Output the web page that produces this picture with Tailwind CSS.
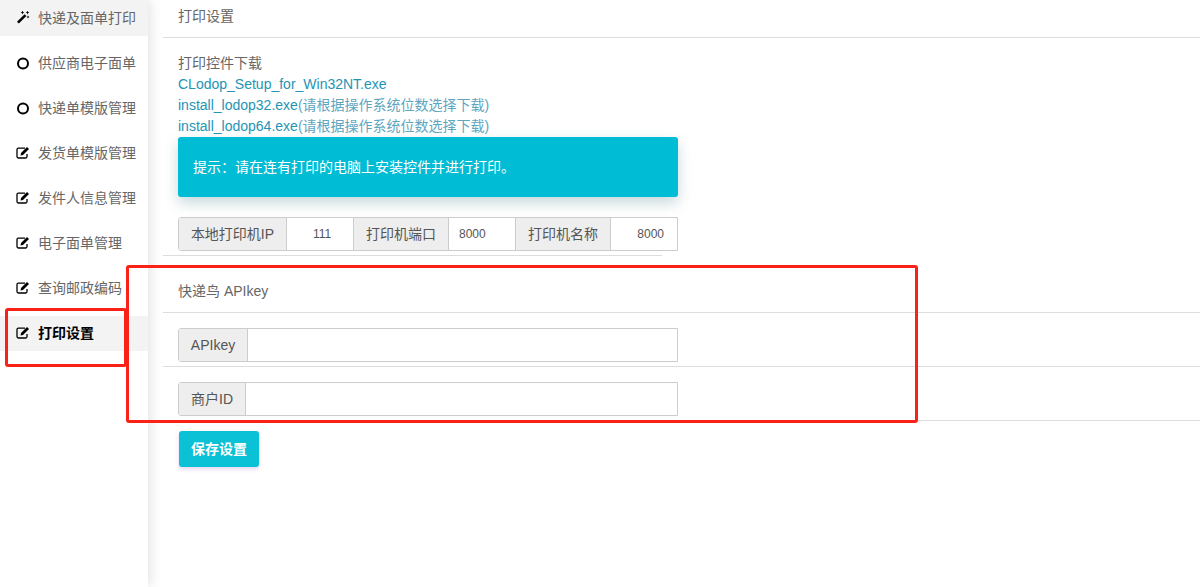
<!DOCTYPE html>
<html lang="en">
<head>
    <meta charset="UTF-8">
    <title>打印设置</title>
    <script src="https://cdn.jsdelivr.net/npm/@tailwindcss/browser@4"></script>
</head>
<body class="bg-white h-[587px] overflow-hidden relative text-[14px] leading-[21px] text-[#666] font-['Liberation_Sans','Noto_Sans_CJK_SC',sans-serif]">
<div class="flex h-full">
    <!-- Sidebar -->
    <aside class="w-[148px] shrink-0 h-full bg-white shadow-[2px_0_12px_rgba(0,0,0,0.12)] text-[#666]">
        <a class="flex items-center h-[36px] mb-[10px] pl-[16px] gap-[8px] bg-[#f3f3f3]">
            <svg class="w-[14px] h-[14px] shrink-0" viewBox="0 1 14 14"><path d="M1 11.8 8.6 4.2l1.800 1.800L2.800 13.600z" fill="#000"/><path d="M6.500.6l.6 1.300 1.300.6-1.300.6-.6 1.300-.6-1.300-1.300-.6 1.300-.6zM12 5.600l.5 1 1 .5-1 .5-.5 1-.5-1-1-.5 1-.5zM11.500.6l.6 1.300 1.300.6-1.300.6-.6 1.300-.6-1.300-1.300-.6 1.300-.6z" fill="#000"/></svg>
            <span>快递及面单打印</span>
        </a>
        <a class="flex items-center h-[35px] mb-[10px] pl-[16px] gap-[8px]">
            <svg class="w-[14px] h-[14px] shrink-0" viewBox="0 0.5 14 14"><circle cx="7" cy="7" r="5" fill="none" stroke="#000" stroke-width="2"/></svg>
            <span>供应商电子面单</span>
        </a>
        <a class="flex items-center h-[35px] mb-[10px] pl-[16px] gap-[8px]">
            <svg class="w-[14px] h-[14px] shrink-0" viewBox="0 0.5 14 14"><circle cx="7" cy="7" r="5" fill="none" stroke="#000" stroke-width="2"/></svg>
            <span>快递单模版管理</span>
        </a>
        <a class="flex items-center h-[35px] mb-[10px] pl-[16px] gap-[8px]">
            <svg class="w-[14px] h-[14px] shrink-0" viewBox="0 1.500 14 14"><path d="M11 8.500v2.600a1.400 1.400 0 0 1-1.400 1.400H2.400a1.400 1.400 0 0 1-1.400-1.400V4a1.400 1.400 0 0 1 1.400-1.400H9" fill="none" stroke="#000" stroke-width="1.300"/><path d="M4.500 10 5 7.500 11 1.500l2 2L7 9.500z" fill="#000"/></svg>
            <span>发货单模版管理</span>
        </a>
        <a class="flex items-center h-[35px] mb-[10px] pl-[16px] gap-[8px]">
            <svg class="w-[14px] h-[14px] shrink-0" viewBox="0 1.500 14 14"><path d="M11 8.500v2.600a1.400 1.400 0 0 1-1.400 1.400H2.400a1.400 1.400 0 0 1-1.400-1.400V4a1.400 1.400 0 0 1 1.400-1.400H9" fill="none" stroke="#000" stroke-width="1.300"/><path d="M4.500 10 5 7.500 11 1.500l2 2L7 9.500z" fill="#000"/></svg>
            <span>发件人信息管理</span>
        </a>
        <a class="flex items-center h-[35px] mb-[10px] pl-[16px] gap-[8px]">
            <svg class="w-[14px] h-[14px] shrink-0" viewBox="0 1.500 14 14"><path d="M11 8.500v2.600a1.400 1.400 0 0 1-1.400 1.400H2.400a1.400 1.400 0 0 1-1.400-1.400V4a1.400 1.400 0 0 1 1.400-1.400H9" fill="none" stroke="#000" stroke-width="1.300"/><path d="M4.500 10 5 7.500 11 1.500l2 2L7 9.500z" fill="#000"/></svg>
            <span>电子面单管理</span>
        </a>
        <a class="flex items-center h-[35px] mb-[10px] pl-[16px] gap-[8px]">
            <svg class="w-[14px] h-[14px] shrink-0" viewBox="0 1.500 14 14"><path d="M11 8.500v2.600a1.400 1.400 0 0 1-1.400 1.400H2.400a1.400 1.400 0 0 1-1.400-1.400V4a1.400 1.400 0 0 1 1.400-1.400H9" fill="none" stroke="#000" stroke-width="1.300"/><path d="M4.500 10 5 7.500 11 1.500l2 2L7 9.500z" fill="#000"/></svg>
            <span>查询邮政编码</span>
        </a>
        <a class="flex items-center h-[35px] pl-[16px] gap-[8px] bg-[#f3f3f3] text-black font-bold">
            <svg class="w-[14px] h-[14px] shrink-0" viewBox="0 1.500 14 14"><path d="M11 8.500v2.600a1.400 1.400 0 0 1-1.400 1.400H2.400a1.400 1.400 0 0 1-1.400-1.400V4a1.400 1.400 0 0 1 1.400-1.400H9" fill="none" stroke="#000" stroke-width="1.300"/><path d="M4.500 10 5 7.500 11 1.500l2 2L7 9.500z" fill="#000"/></svg>
            <span>打印设置</span>
        </a>
    </aside>

    <!-- Main -->
    <main class="flex-1 ml-[15px]">
        <div class="h-[38px] border-b border-[#ddd] pl-[15px] pt-[6px]">打印设置</div>

        <div class="pl-[15px] pt-[15px]">
            <p>打印控件下载</p>
            <p class="text-[#2494b5]">CLodop_Setup_for_Win32NT.exe</p>
            <p class="text-[#2494b5]">install_lodop32.exe<span class="text-[#5fa5c0]">(请根据操作系统位数选择下载)</span></p>
            <p class="text-[#2494b5]">install_lodop64.exe<span class="text-[#5fa5c0]">(请根据操作系统位数选择下载)</span></p>
            <div class="w-[500px] h-[60px] flex items-center pl-[15px] bg-[#00bcd4] text-white rounded-[3px] shadow-[0_6px_14px_rgba(0,80,100,0.22)]">提示：请在连有打印的电脑上安装控件并进行打印。</div>

            <div class="flex w-[500px] h-[34px] mt-[20px] border border-[#ccc] rounded-l-[3px] text-[#555]">
                <span class="w-[108px] shrink-0 flex items-center justify-center bg-[#eee] border-r border-[#ccc]">本地打印机IP</span>
                <span class="w-[66px] shrink-0 flex items-center justify-center text-[12px] pl-[4px]">111</span>
                <span class="w-[96px] shrink-0 flex items-center justify-center bg-[#eee] border-x border-[#ccc]">打印机端口</span>
                <span class="w-[66px] shrink-0 flex items-center pl-[10px] text-[12px]">8000</span>
                <span class="w-[96px] shrink-0 flex items-center justify-center bg-[#eee] border-x border-[#ccc]">打印机名称</span>
                <span class="flex-1 flex items-center justify-end pr-[13px] text-[12px]">8000</span>
            </div>
        </div>

        <div class="w-[499px] border-b border-[#ddd] mt-[4px]"></div>

        <div class="h-[57px] border-b border-[#ddd] pl-[15px] pt-[25px]">快递鸟 APIkey</div>

        <div class="h-[54px] border-b border-[#ddd] pl-[15px] pt-[15px]">
            <div class="flex w-[500px] h-[34px] border border-[#ccc] rounded-l-[3px] text-[#555]">
                <span class="w-[69px] flex items-center justify-center bg-[#eee] border-r border-[#ccc]">APIkey</span>
            </div>
        </div>
        <div class="h-[54px] border-b border-[#ddd] pl-[15px] pt-[15px]">
            <div class="flex w-[500px] h-[34px] border border-[#ccc] rounded-l-[3px] text-[#555]">
                <span class="w-[67px] flex items-center justify-center bg-[#eee] border-r border-[#ccc]">商户ID</span>
            </div>
        </div>

        <button class="block ml-[16px] mt-[10px] w-[80px] h-[36px] bg-[#0bc1d6] text-white font-bold rounded-[3px] shadow-[0_2px_4px_rgba(150,80,200,0.25)]">保存设置</button>
    </main>
</div>

<!-- red annotation boxes -->
<div class="absolute left-[5px] top-[308px] w-[122px] h-[59px] border-[3px] border-[#fb2117] rounded-[3px]"></div>
<div class="absolute left-[126px] top-[265px] w-[792px] h-[158px] border-[3px] border-[#fb2117] rounded-[3px]"></div>
</body>
</html>
